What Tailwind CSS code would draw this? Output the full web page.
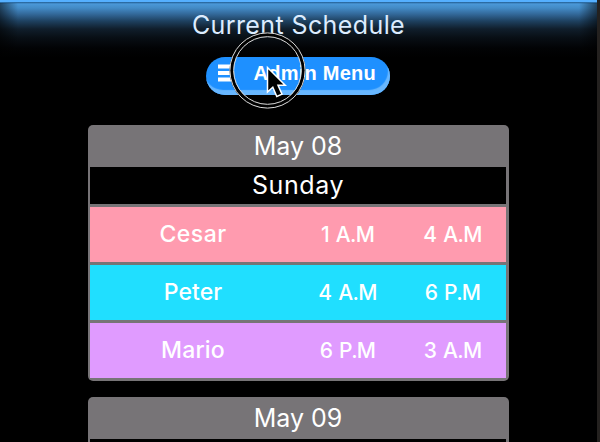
<!DOCTYPE html>
<html lang="en">
<head>
<meta charset="utf-8">
<title>Current Schedule</title>
<script src="https://cdn.jsdelivr.net/npm/@tailwindcss/browser@4"></script>
</head>
<body class="relative h-[442px] w-[600px] overflow-hidden bg-black text-white font-['Inter',sans-serif]">
<div class="flex h-full">
  <main class="relative flex h-full w-[597px] flex-col items-center overflow-hidden">
    <div class="absolute inset-x-0 top-[2px] h-[58px] bg-[linear-gradient(to_bottom,#215d91_0px,#4a98d8_2px,#438bc6_6px,#33699a_12px,#1e4160_19px,#101e2b_27px,#080e14_36px,#020305_46px,#000_56px)]"></div>
    <div class="absolute left-0 top-[3px] h-[56px] w-[18px] bg-linear-to-r from-black/55 to-transparent"></div>
    <div class="absolute right-0 top-[3px] h-[56px] w-[18px] bg-linear-to-l from-black/55 to-transparent"></div>
    <div class="absolute inset-x-0 top-0 h-[2px] bg-[#55b0ff]"></div>

    <h1 class="relative mt-[10px] h-[30px] w-full shrink-0 text-center text-[25px] leading-[30px] tracking-[0.4px] text-[#dcecff]">Current Schedule</h1>

    <button class="relative mt-[17px] flex h-[38px] w-[184px] shrink-0 -translate-x-px items-start rounded-full bg-[#1e90ff] pl-[12px] pt-[7px] shadow-[inset_-2px_-5px_1px_#68b7ff] font-['Liberation_Sans',Arial,sans-serif]">
      <svg class="h-[18px] w-[16px]" viewBox="0 0 16 18" fill="#fff"><path d="M0 .5h16v4H0zM0 7h16v4H0zM0 13.500h16v4H0z"/></svg>
      <span class="ml-[20px] text-[20px] font-bold leading-[18px] tracking-[0.25px] whitespace-nowrap">Admin Menu</span>
    </button>

    <section class="mt-[30px] flex h-[256px] w-[421px] shrink-0 flex-col gap-[3px] rounded-[5px] bg-[#777477] pr-[3px] pl-[2px] pb-[3px] text-center">
      <div>
        <h2 class="h-[42px] text-[25px] leading-[43px] tracking-[0px]">May 08</h2>
        <div class="h-[37px] bg-black text-[25px] leading-[37px] tracking-[0.6px]">Sunday</div>
      </div>
      <div class="grid h-[55px] grid-cols-[206px_103px_107px] bg-[#ff9baf] text-[21px] font-medium leading-[55px] tracking-[-0.7px] [word-spacing:2px]"><span class="text-[23px] tracking-[0.5px]">Cesar</span><span>1 A.M</span><span>4 A.M</span></div>
      <div class="grid h-[55px] grid-cols-[206px_103px_107px] bg-[#20dfff] text-[21px] font-medium leading-[55px] tracking-[-0.7px] [word-spacing:2px]"><span class="text-[23px] tracking-[0.1px]">Peter</span><span>4 A.M</span><span>6 P.M</span></div>
      <div class="grid h-[55px] grid-cols-[206px_103px_107px] bg-[#e09bff] text-[21px] font-medium leading-[55px] tracking-[-0.7px] [word-spacing:2px]"><span class="text-[23px] tracking-[0.2px]">Mario</span><span>6 P.M</span><span>3 A.M</span></div>
    </section>

    <section class="mt-[16px] h-[80px] w-[421px] shrink-0 rounded-[5px] bg-[#777477] pr-[3px] pl-[2px] text-center">
      <h2 class="h-[42px] text-[25px] leading-[43px] tracking-[0px]">May 09</h2>
      <div class="h-[37px] bg-black"></div>
    </section>
  </main>
  <aside class="h-full w-[3px] bg-[#24211f]"></aside>
</div>

<svg class="pointer-events-none absolute left-[228px] top-[31px] h-[80px] w-[80px]" viewBox="0 0 80 80" fill="none">
  <circle cx="39.500" cy="39.500" r="36" stroke="#000" stroke-width="4"/>
  <circle cx="39.500" cy="39.500" r="37.600" stroke="#ddd" stroke-width="1"/>
  <circle cx="39.500" cy="39.500" r="33.800" stroke="#ddd" stroke-width="1"/>
  <path d="M39.500 36.500v24.500l5.300-4.800 4 9.300 5.200-2.300-4-8.900h7.200z" fill="#000" stroke="#fff" stroke-width="1.500"/>
</svg>
</body>
</html>
